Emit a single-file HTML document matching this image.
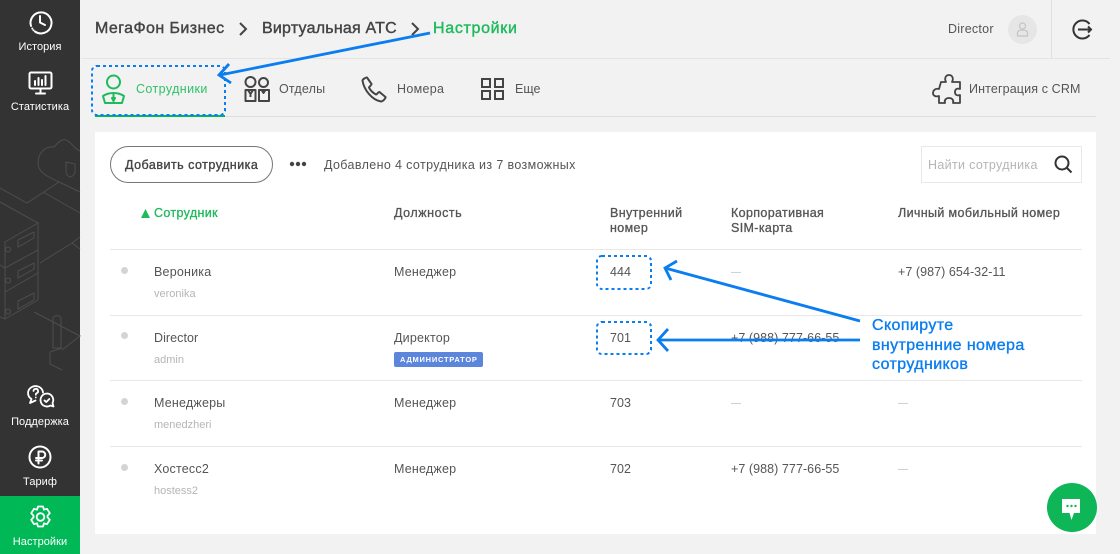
<!DOCTYPE html>
<html lang="ru"><head><meta charset="utf-8"><title>Настройки</title>
<style>
html,body{margin:0;padding:0}
body{width:1120px;height:554px;overflow:hidden;background:#f2f2f2;position:relative;font-family:"Liberation Sans",sans-serif;color:#444}
.t{position:absolute;white-space:nowrap;line-height:16px;font-size:12.5px}
.n{color:#fff;font-size:11px;width:80px;text-align:center;left:0;letter-spacing:.05px}
.m{font-size:12.5px;color:#555;letter-spacing:.2px}
.f{font-size:12.5px;color:#555;letter-spacing:.06px}
.s{font-size:11px;color:#b5b5b5}
.h{font-size:12.5px;color:#555;line-height:15px;letter-spacing:.36px;-webkit-text-stroke:.3px currentColor}
.b{font-size:16px;color:#444;letter-spacing:.35px;-webkit-text-stroke:.4px currentColor}
.d{font-size:10px;color:#bbb;margin-top:1px}
.ln{position:absolute;left:110px;width:972px;height:1px;background:#e8e8e8}
.dot{position:absolute;left:121px;width:7px;height:7px;border-radius:50%;background:#d4d4d4}
svg{position:absolute;overflow:visible}
</style></head><body>

<div style="position:absolute;left:0;top:0;width:80px;height:554px;background:#333"></div>
<div style="position:absolute;left:0;top:496px;width:80px;height:58px;background:#00b956"></div>

<svg style="left:0;top:130px" width="80" height="240" fill="none" stroke="#4d4d4d" stroke-width="1">
<path d="M80 21C72 18 70 8 62 10C58 12 56 15 54 17C44 16 38 24 38 33C38 42 46 46 59 52L80 62M59 52L27 73L0 58M43 62L80 83M80 107L72 113L80 119M72 113L40 133M0 72L38 93V120L5 138L0 135M38 93L5 112V138M18 110L34 102V108L18 117ZM8 117a2.500 2.500 0 1 0 .1 0M38 120V143L5 162V138M18 141L34 133V139L18 148ZM8 148a2.500 2.500 0 1 0 .1 0M38 143V170L5 189M5 162V189L0 187M18 171L34 163V170L18 179ZM8 179a2.500 2.500 0 1 0 .1 0M34 182L80 206L62 220M53 188V218H61V188C60 185 54 185 53 188M50 222V234L62 240M50 222L62 218M66 32L75 34V43C73 46 71 47 70 47C67 46 66 44 66 41Z"/>
</svg>

<!-- sidebar icons -->
<svg style="left:28px;top:10px" width="24" height="24" viewBox="0 0 24 24" fill="none" stroke="#fff" stroke-width="2" stroke-linecap="round" stroke-linejoin="round">
<path d="M3 16A10.500 10.500 0 1 1 7 21.500"/><path d="M4.300 18.500v.1M5.500 20.300v.1M12 6v6.500l5 2.500"/></svg>
<div class="t n" style="top:39px">История</div>
<svg style="left:28px;top:71px" width="25" height="24" viewBox="0 0 25 24" fill="none" stroke="#fff" stroke-width="2" stroke-linecap="round" stroke-linejoin="round">
<rect x="1.500" y="1.500" width="22" height="16" rx="1.500"/><path d="M12.500 17.500V22M8 22.500h9M7 14v-4M10.500 14V7M14 14v-5M17.500 14V5" /></svg>
<div class="t n" style="top:99px">Статистика</div>

<svg style="left:27px;top:384px" width="27" height="26" viewBox="0 0 27 26" fill="none" stroke="#fff" stroke-width="1.800" stroke-linecap="round" stroke-linejoin="round">
<path d="M16 8.500A7.500 7 0 1 0 4.500 15L3 19L8.500 16.500"/><path d="M6.500 7a2.300 2.300 0 1 1 3.300 2.200c-.8.400-1 .9-1 1.600M8.800 13.400v.1"/><path d="M20 9.500a6.500 6.500 0 1 0 3.500 12l3 1-1-3.500A6.500 6.500 0 0 0 20 9.500Z"/><path d="M17.500 16.500l1.800 1.500 3-3"/></svg>
<div class="t n" style="top:414px">Поддержка</div>
<svg style="left:28px;top:445px" width="24" height="24" viewBox="0 0 24 24" fill="none" stroke="#fff" stroke-width="2" stroke-linecap="round" stroke-linejoin="round">
<circle cx="12" cy="12" r="10.500"/><path d="M10.500 18.500V6.500H14a3 3 0 0 1 0 6.500H8M8 15.500h6"/></svg>
<div class="t n" style="top:474px">Тариф</div>
<svg style="left:29px;top:505px" width="23" height="24" viewBox="0 0 23 24" fill="none" stroke="#fff" stroke-width="1.800" stroke-linejoin="round">
<path d="M9 1.500h5l1 3.200 3-.9 2.800 4.400-2.300 2.500v1.600l2.300 2.500-2.800 4.400-3-.9-1 3.200H9l-1-3.200-3 .9-2.800-4.400 2.300-2.500v-1.600L2.200 8.200 5 3.800l3 .9Z"/><circle cx="11.500" cy="12" r="3.800"/></svg>
<div class="t n" style="top:534px">Настройки</div>

<!-- header -->
<div style="position:absolute;left:81px;top:58px;width:1029px;height:1px;background:#e4e4e4"></div>
<div style="position:absolute;left:1051px;top:0;width:1px;height:58px;background:#e0e0e0"></div>
<div class="t b" style="left:95px;top:21px;letter-spacing:.42px">МегаФон Бизнес</div>
<svg style="left:238px;top:22px" width="10" height="14" fill="none" stroke="#444" stroke-width="2"><path d="M2 1l6 6-6 6"/></svg>
<div class="t b" style="left:262px;top:21px;letter-spacing:.22px">Виртуальная АТС</div>
<svg style="left:410px;top:22px" width="10" height="14" fill="none" stroke="#444" stroke-width="2"><path d="M2 1l6 6-6 6"/></svg>
<div class="t b" style="left:433px;top:21px;color:#1fba5c;letter-spacing:.68px">Настройки</div>
<div class="t" style="left:948px;top:21px;font-size:12.5px;color:#555;letter-spacing:.25px">Director</div>
<div style="position:absolute;left:1008px;top:15px;width:29px;height:29px;border-radius:50%;background:#e6e6e6"></div>
<svg style="left:1016px;top:22px" width="13" height="15" fill="none" stroke="#c4c4c4" stroke-width="1.200"><circle cx="6.500" cy="4" r="3"/><path d="M1.500 14v-3c0-2 2-3 5-3s5 1 5 3v3Z"/></svg>
<svg style="left:1072px;top:19px" width="21" height="21" viewBox="0 0 21 21" fill="none" stroke="#333" stroke-width="2"><path d="M17.500 5A9 9 0 1 0 17.500 16"/><path d="M6 10.500h12.500M16 7.500l3 3-3 3"/></svg>

<!-- tabs -->
<div style="position:absolute;left:95px;top:116px;width:1001px;height:1px;background:#dedede"></div>
<div style="position:absolute;left:95px;top:115px;width:130px;height:2px;background:#00b956"></div>
<svg style="left:102px;top:74px" width="23" height="31" viewBox="0 0 23 31" fill="none" stroke="#1fba5c" stroke-width="2" stroke-linejoin="round"><circle cx="11.500" cy="8" r="6.500"/><path d="M3 29L1 22c3-2 6-3 10.500-3S19 20 22 22l-2 7Z"/><path d="M11.500 20v5"/><path d="M10 24h3l-1.500 3Z" fill="#1fba5c"/></svg>
<div class="t" style="left:136px;top:81px;font-size:12.5px;color:#2fc16a;letter-spacing:.4px">Сотрудники</div>
<svg style="left:244px;top:76px" width="26" height="26" viewBox="0 0 26 26" fill="none" stroke="#444" stroke-width="2" stroke-linejoin="round"><circle cx="6.500" cy="6" r="5"/><circle cx="19.500" cy="6.500" r="4.500"/><path d="M1.500 14h10v11h-10ZM15 14h10v11H15ZM4 14l2.500 4L9 14M6.500 18v3M17.500 14l2 3 2-3"/></svg>
<div class="t" style="left:279px;top:81px;color:#555;letter-spacing:.2px">Отделы</div>
<svg style="left:361px;top:76px" width="26" height="27" viewBox="0 0 26 27" fill="none" stroke="#444" stroke-width="2" stroke-linejoin="round"><path d="M1.500 4.500C1 4 5 1 6 1.500L10.500 8C11 9 8.500 10 8 11.500C9 14 12 17 15 18.500C16.500 18 17.500 15.500 18.500 16L24.500 21C25 22 22 25.500 20 25.500C11 24 3 14 1.500 4.500Z"/></svg>
<div class="t" style="left:397px;top:81px;color:#555;letter-spacing:.3px">Номера</div>
<svg style="left:481px;top:78px" width="23" height="22" fill="none" stroke="#444" stroke-width="2"><rect x="1" y="1" width="8" height="8"/><rect x="14" y="1" width="8" height="8"/><rect x="1" y="13" width="8" height="8"/><rect x="14" y="13" width="8" height="8"/></svg>
<div class="t" style="left:515px;top:81px;color:#555">Еще</div>
<svg style="left:932px;top:74px" width="30" height="30" viewBox="0 0 30 30" fill="none" stroke="#444" stroke-width="1.800" stroke-linejoin="round"><path d="M9 8h5c-2-4 0-7 3-7s5 3 3 7h8v7c-3-1-5 0-5 3s2 4 5 3v8h-7c1-3-1-5-4-5s-5 2-4 5H7v-7c-3 1-6 0-6-3s3-5 6-4Z"/></svg>
<div class="t" style="left:969px;top:81px;color:#555;letter-spacing:.13px">Интеграция с CRM</div>

<!-- card -->
<div style="position:absolute;left:95px;top:132px;width:1001px;height:402px;background:#fff"></div>
<div style="position:absolute;left:110px;top:146px;width:163px;height:37px;box-sizing:border-box;border:1px solid #777;border-radius:19px;background:#fff"></div>
<div class="t" style="left:125px;top:157px;font-size:12.5px;color:#444;letter-spacing:.49px;-webkit-text-stroke:.35px #444">Добавить сотрудника</div>
<svg style="left:289px;top:161px" width="18" height="6" fill="#444"><circle cx="3" cy="3" r="2.200"/><circle cx="9" cy="3" r="2.200"/><circle cx="15" cy="3" r="2.200"/></svg>
<div class="t" style="left:324px;top:157px;color:#555;font-size:12.5px;letter-spacing:.37px">Добавлено 4 сотрудника из 7 возможных</div>
<div style="position:absolute;left:921px;top:146px;width:161px;height:37px;box-sizing:border-box;border:1px solid #e8e8e8"></div>
<div class="t" style="left:928px;top:157px;color:#b5b5b5;letter-spacing:.33px">Найти сотрудника</div>
<svg style="left:1054px;top:155px" width="19" height="19" fill="none" stroke="#333" stroke-width="2"><circle cx="8" cy="8" r="6.500"/><path d="M12.500 12.500l5 5"/></svg>

<svg style="left:141px;top:209px" width="9" height="9"><path d="M4.500 0L9 9H0Z" fill="#1fba5c"/></svg>
<div class="t h" style="left:154px;top:206px;color:#1fba5c">Сотрудник</div>
<div class="t h" style="left:394px;top:206px;letter-spacing:.55px">Должность</div>
<div class="t h" style="left:610px;top:206px">Внутренний<br>номер</div>
<div class="t h" style="left:731px;top:206px">Корпоративная<br>SIM-карта</div>
<div class="t h" style="left:898px;top:206px">Личный мобильный номер</div>

<div class="ln" style="top:249px"></div><div class="ln" style="top:315px"></div><div class="ln" style="top:380px"></div><div class="ln" style="top:446px"></div>

<div class="dot" style="top:267px"></div>
<div class="t m" style="left:154px;top:264px">Вероника</div><div class="t s" style="left:154px;top:286px">veronika</div>
<div class="t m" style="left:394px;top:264px">Менеджер</div><div class="t f" style="left:610px;top:264px">444</div>
<div class="t d" style="left:731px;top:264px">—</div><div class="t f" style="left:898px;top:264px">+7 (987) 654-32-11</div>

<div class="dot" style="top:332px"></div>
<div class="t f" style="left:154px;top:330px">Director</div><div class="t s" style="left:154px;top:352px">admin</div>
<div class="t m" style="left:394px;top:330px">Директор</div>
<div style="position:absolute;left:394px;top:352px;width:89px;height:15px;background:#5b86dc;border-radius:2px"></div>
<div class="t" style="left:400px;top:352px;line-height:15px;font-size:7.5px;font-weight:700;color:#fff;letter-spacing:.75px">АДМИНИСТРАТОР</div>
<div class="t f" style="left:610px;top:330px">701</div><div class="t f" style="left:731px;top:330px">+7 (988) 777-66-55</div>

<div class="dot" style="top:398px"></div>
<div class="t m" style="left:154px;top:395px">Менеджеры</div><div class="t s" style="left:154px;top:417px">menedzheri</div>
<div class="t m" style="left:394px;top:395px">Менеджер</div><div class="t f" style="left:610px;top:395px">703</div>
<div class="t d" style="left:731px;top:395px">—</div><div class="t d" style="left:898px;top:395px">—</div>

<div class="dot" style="top:464px"></div>
<div class="t m" style="left:154px;top:461px">Хостесс2</div><div class="t s" style="left:154px;top:483px">hostess2</div>
<div class="t m" style="left:394px;top:461px">Менеджер</div><div class="t f" style="left:610px;top:461px">702</div>
<div class="t f" style="left:731px;top:461px">+7 (988) 777-66-55</div><div class="t d" style="left:898px;top:461px">—</div>

<!-- annotations -->
<svg style="left:0;top:0" width="1120" height="554" fill="none" stroke="#0a7df0" stroke-width="2" stroke-dasharray="3 3" shape-rendering="crispEdges">
<rect x="92" y="66" width="133" height="49" rx="5"/>
<rect x="597" y="256" width="54" height="33" rx="5"/>
<rect x="597" y="322" width="54" height="32" rx="5"/>
</svg>
<svg style="left:0;top:0" width="1120" height="554" fill="none" stroke="#0a7df0" stroke-width="2.800">
<path d="M430 33L220 75M229 64L219 75L231 83"/>
<path d="M860 321L665 268M677 261L665 268L671 280"/>
<path d="M860 340L658 340M668 329L658 340L668 351"/>
</svg>
<div class="t" style="left:872px;top:316px;font-size:16px;line-height:19.5px;color:#0a7df0;letter-spacing:.4px;-webkit-text-stroke:.35px #0a7df0">Скопируте<br>внутренние номера<br>сотрудников</div>

<!-- chat -->
<div style="position:absolute;left:1047px;top:483px;width:50px;height:49px;border-radius:50%;background:#0fb657"></div>
<svg style="left:1062px;top:499px" width="18" height="21"><path d="M0 0H18V14H12L9.500 21L7.500 14H0Z" fill="#fff"/><circle cx="5.500" cy="7" r="1.200" fill="#0fb657"/><circle cx="9.500" cy="7" r="1.200" fill="#0fb657"/><circle cx="13.500" cy="7" r="1.200" fill="#0fb657"/></svg>

</body></html>
